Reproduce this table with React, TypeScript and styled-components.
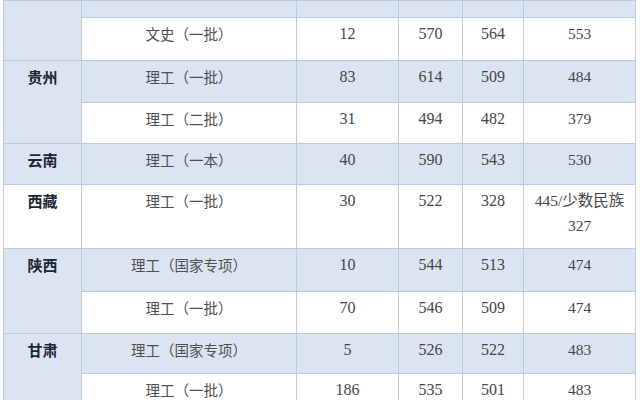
import styled, { createGlobalStyle } from 'styled-components';

const GlobalStyle = createGlobalStyle`
  html, body {
    margin: 0;
    padding: 0;
    background: #ffffff;
  }
  body {
    font-family: "Liberation Serif", "Noto Sans CJK SC", serif;
    overflow: hidden;
  }
`;

const Page = styled.div`
  width: 640px;
  height: 400px;
  overflow: hidden;
  padding-left: 3px;
  box-sizing: border-box;
`;

const Table = styled.table`
  width: 632px;
  border-collapse: collapse;
  table-layout: fixed;
`;

const Col = styled.col<{ w: number }>`
  width: ${({ w }) => w}px;
`;

interface RowProps {
  shade?: boolean;
  h: number;
}

const Row = styled.tr<RowProps>`
  height: ${({ h }) => h}px;
  background-color: ${({ shade }) => (shade ? '#dbe5f1' : '#ffffff')};
`;

const Cell = styled.td`
  border: 1px solid #bccce0;
  padding: 3px 4px 0;
  vertical-align: top;
  text-align: center;
  line-height: 25px;
  font-size: 16px;
  color: #464646;
  font-family: "Liberation Serif", "Noto Sans CJK SC", serif;
`;

const TypeCell = styled(Cell)`
  font-family: "Noto Sans CJK SC", sans-serif;
  font-size: 14.5px;
  color: #505050;
`;

const NoteCell = styled(Cell)`
  font-size: 15.5px;
`;

interface ProvinceProps {
  shade?: boolean;
}

const ProvinceCell = styled.td<ProvinceProps>`
  border: 1px solid #bccce0;
  padding: 3px 4px 0;
  vertical-align: top;
  text-align: center;
  line-height: 25px;
  font-family: "Noto Sans CJK SC", sans-serif;
  font-weight: 700;
  font-size: 15px;
  color: #1e2633;
  background-color: ${({ shade }) => (shade ? '#dbe5f1' : '#ffffff')};
`;

type Line = {
  type: string;
  plan: string;
  max: string;
  min: string;
  line: React.ReactNode;
  shade: boolean;
  h: number;
};

type Group = {
  province: string;
  lines: Line[];
};

const widths = [78, 215, 102, 64, 61, 112];

const groups: Group[] = [
  {
    province: '',
    lines: [
      { type: '', plan: '', max: '', min: '', line: '', shade: true, h: 17 },
      { type: '文史（一批）', plan: '12', max: '570', min: '564', line: '553', shade: false, h: 43 },
    ],
  },
  {
    province: '贵州',
    lines: [
      { type: '理工（一批）', plan: '83', max: '614', min: '509', line: '484', shade: true, h: 42 },
      { type: '理工（二批）', plan: '31', max: '494', min: '482', line: '379', shade: false, h: 41 },
    ],
  },
  {
    province: '云南',
    lines: [
      { type: '理工（一本）', plan: '40', max: '590', min: '543', line: '530', shade: true, h: 41 },
    ],
  },
  {
    province: '西藏',
    lines: [
      {
        type: '理工（一批）',
        plan: '30',
        max: '522',
        min: '328',
        line: (
          <>
            445/少数民族
            <br />
            327
          </>
        ),
        shade: false,
        h: 64,
      },
    ],
  },
  {
    province: '陕西',
    lines: [
      { type: '理工（国家专项）', plan: '10', max: '544', min: '513', line: '474', shade: true, h: 43 },
      { type: '理工（一批）', plan: '70', max: '546', min: '509', line: '474', shade: false, h: 42 },
    ],
  },
  {
    province: '甘肃',
    lines: [
      { type: '理工（国家专项）', plan: '5', max: '526', min: '522', line: '483', shade: true, h: 40 },
      { type: '理工（一批）', plan: '186', max: '535', min: '501', line: '483', shade: false, h: 42 },
    ],
  },
];

function App() {
  return (
    <>
      <GlobalStyle />
      <Page>
        <Table>
          <colgroup>
            {widths.map((w, i) => (
              <Col key={i} w={w} />
            ))}
          </colgroup>
          <tbody>
            {groups.map((group, gi) =>
              group.lines.map((line, li) => (
                <Row key={`${gi}-${li}`} shade={line.shade} h={line.h}>
                  {li === 0 && (
                    <ProvinceCell rowSpan={group.lines.length} shade={line.shade}>
                      {group.province}
                    </ProvinceCell>
                  )}
                  <TypeCell>{line.type}</TypeCell>
                  <Cell>{line.plan}</Cell>
                  <Cell>{line.max}</Cell>
                  <Cell>{line.min}</Cell>
                  <NoteCell>{line.line}</NoteCell>
                </Row>
              ))
            )}
          </tbody>
        </Table>
      </Page>
    </>
  );
}

export default App;
